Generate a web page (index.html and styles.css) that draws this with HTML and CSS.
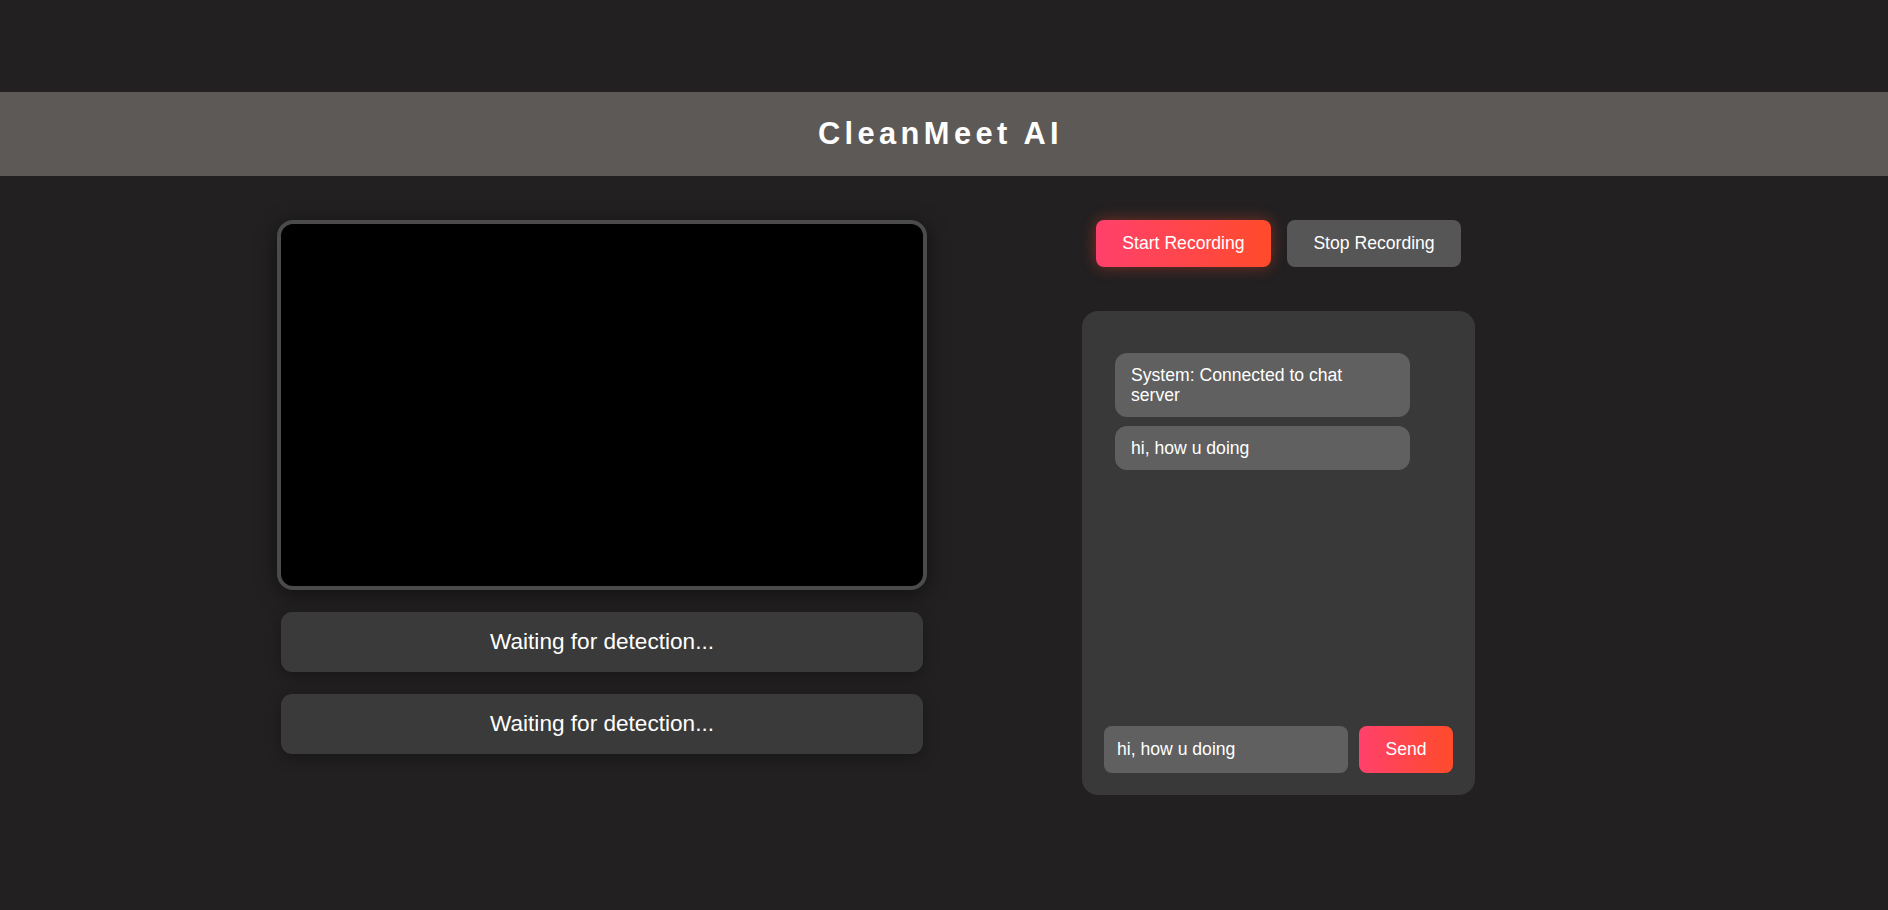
FILE: index.html
```html
<!DOCTYPE html>
<html lang="en">
<head>
<meta charset="utf-8">
<title>CleanMeet AI</title>
<link rel="stylesheet" href="styles.css">
</head>
<body>
<header class="topbar">
  <h1 class="title">CleanMeet AI</h1>
</header>
<main class="main">
  <section class="left">
    <div class="video"></div>
    <div class="detect">Waiting for detection...</div>
    <div class="detect">Waiting for detection...</div>
  </section>
  <section class="right">
    <div class="controls">
      <button class="btn btn-start">Start Recording</button>
      <button class="btn btn-stop">Stop Recording</button>
    </div>
    <div class="chat">
      <div class="messages">
        <div class="msg">System: Connected to chat server</div>
        <div class="msg">hi, how u doing</div>
      </div>
      <div class="composer">
        <input class="chat-input" type="text" value="hi, how u doing">
        <button class="btn btn-send">Send</button>
      </div>
    </div>
  </section>
</main>
</body>
</html>
```
FILE: styles.css
```css
html, body {
  margin: 0;
  background: #222021;
}
body {
  font-family: "Liberation Sans", Arial, sans-serif;
  color: #fff;
  padding-top: 92px;
}
.topbar {
  background: #5c5957;
  height: 84px;
  display: flex;
  align-items: center;
  justify-content: center;
}
.title {
  margin: 0;
  padding-right: 7px;
  font-size: 30.8px;
  line-height: 36px;
  font-weight: 700;
  letter-spacing: 4.4px;
  color: #fff;
}
.main {
  display: grid;
  grid-template-columns: 650px 393px;
  column-gap: 155px;
  padding: 44px 0 0 277px;
  align-items: start;
}
.video {
  box-sizing: border-box;
  height: 370px;
  border: 4px solid #4b4b4b;
  border-radius: 16px;
  background: #000;
  box-shadow: 0 4px 20px rgba(0, 0, 0, 0.5);
}
.detect {
  margin: 22px 4px 0;
  height: 60px;
  display: flex;
  align-items: center;
  justify-content: center;
  background: #3a3a3a;
  border-radius: 11px;
  font-size: 22.6px;
  color: #fff;
  box-shadow: 0 4px 15px rgba(0, 0, 0, 0.3);
}
.right {
  display: flex;
  flex-direction: column;
}
.controls {
  display: flex;
  justify-content: center;
  gap: 16px;
}
.btn {
  font-family: inherit;
  font-size: 17.6px;
  line-height: 20.4px;
  padding: 13.2px 26.4px;
  border: none;
  border-radius: 8px;
  color: #fff;
  cursor: pointer;
}
.btn-start,
.btn-send {
  background: linear-gradient(90deg, #ff416c, #ff4b2b);
}
.btn-start {
  box-shadow: 0 0 15px rgba(255, 75, 43, 0.4);
}
.btn-stop {
  background: #565656;
}
.chat {
  margin-top: 44px;
  height: 484px;
  box-sizing: border-box;
  background: #393939;
  border-radius: 16px;
  padding: 22px;
  display: flex;
  flex-direction: column;
}
.messages {
  flex: 1;
  padding: 20px 11px;
  display: flex;
  flex-direction: column;
  gap: 9px;
}
.msg {
  width: 295px;
  box-sizing: border-box;
  background: #606060;
  border-radius: 12px;
  padding: 12px 16px;
  font-size: 17.6px;
  line-height: 20px;
}
.composer {
  display: flex;
  gap: 11px;
}
.chat-input {
  width: 244px;
  height: 47px;
  box-sizing: border-box;
  background: #606060;
  border: none;
  border-radius: 8px;
  padding: 0 13px;
  color: #fff;
  font-size: 17.6px;
  font-family: inherit;
  outline: none;
}
.btn-send {
  height: 47px;
  padding: 0 26.4px;
}
```
